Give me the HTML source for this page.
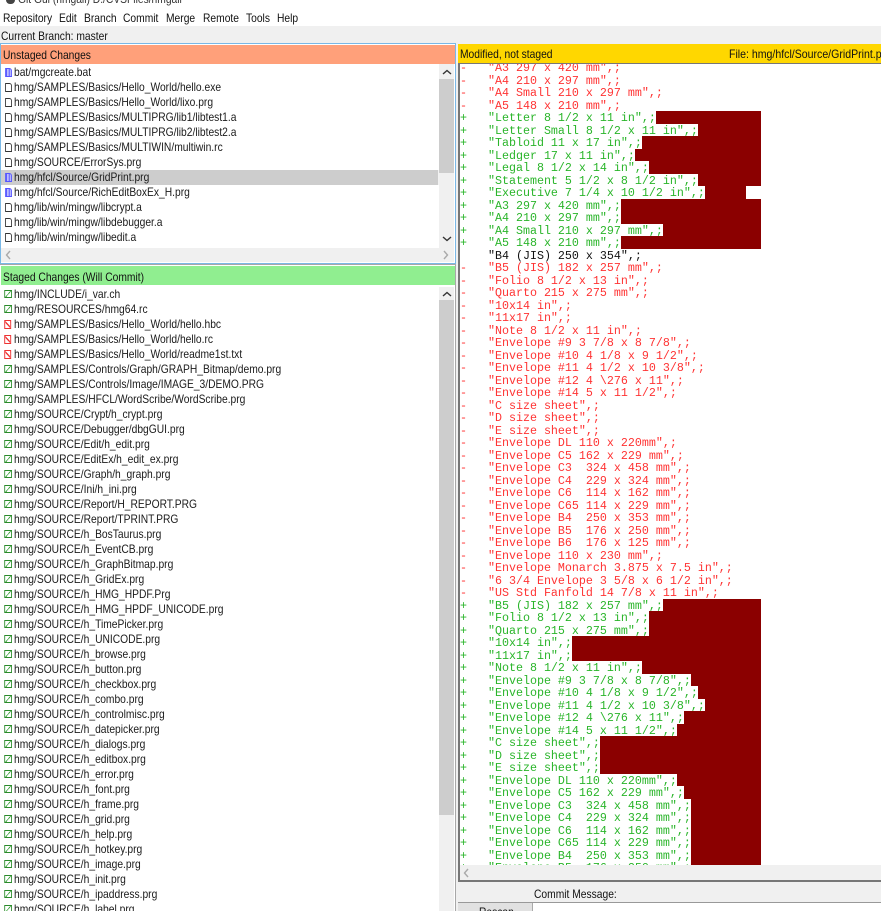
<!DOCTYPE html>
<html><head><meta charset="utf-8"><style>
html,body{margin:0;padding:0;width:881px;height:911px;overflow:hidden;background:#f0f0f0;font:12px/15px "Liberation Sans",sans-serif;color:#111}
div{position:absolute;box-sizing:border-box}
svg{position:absolute;fill:none;stroke-width:1.4}
#w{left:0;top:0;width:881px;height:911px;overflow:hidden}
.t{white-space:pre;transform:scaleX(.856);transform-origin:0 0}
.l{transform:scaleX(.856);transform-origin:0 0;width:512px}
p{margin:0;height:15px;line-height:15px;padding-left:16.36px;position:relative;white-space:pre;color:#1a1a1a}
p::before{content:"";position:absolute;left:5.8px;top:3px;width:8.2px;height:9px;box-sizing:border-box}
.f::before{border:1px solid #333;border-top-right-radius:3px;background:#fff}
.m::before{border:1px solid #55f;border-top-right-radius:3px;background:repeating-linear-gradient(90deg,#55f 0 1px,#ccf 1px 2px)}
.s::before{left:4.7px;top:-1px;margin-top:4px;width:9.3px;height:8px;border:1px solid #2a8a2a;background:linear-gradient(135deg,#fff 45%,#6c6 46%,#2a8a2a 55%,#fff 56%)}
.x::before{left:4.7px;border:1px solid #e33;background:linear-gradient(45deg,#fff 42%,#e33 43%,#e33 57%,#fff 58%),#fcc}
.sel{background:#cdcdcd}
.c{font:11.67px/14.5px "Liberation Mono",monospace}
.c>i{display:block;font-style:normal;height:12.508px;white-space:pre}
.d{color:#f33}
.p{color:#2ab52a}
.k{color:#111}
.a{width:301px;background:#8b0000}
.a b{float:left;height:12.508px;background:#fff;font-weight:normal}
</style></head><body><div id="w">
<div style="left:0;top:0;width:881px;height:26px;background:#fff"></div>
<div style="left:6px;top:-5px;width:9px;height:9px;background:#444;border-radius:4px"></div>
<div class="t" style="left:18px;top:-8px;color:#333">Git Gui (hmgall) D:/CVSFiles/hmgall</div>
<div class="t" style="left:3px;top:11px">Repository</div>
<div class="t" style="left:59px;top:11px">Edit</div>
<div class="t" style="left:84px;top:11px">Branch</div>
<div class="t" style="left:123px;top:11px">Commit</div>
<div class="t" style="left:166px;top:11px">Merge</div>
<div class="t" style="left:203px;top:11px">Remote</div>
<div class="t" style="left:246px;top:11px">Tools</div>
<div class="t" style="left:277px;top:11px">Help</div>
<div class="t" style="left:1px;top:29px">Current Branch: master</div>

<div style="left:0;top:43px;width:456px;height:221px;border:1px solid #7ab8e6;background:#fff"></div>
<div style="left:1px;top:45px;width:454px;height:19px;background:#ffa07a"></div>
<div class="t" style="left:3px;top:48px">Unstaged Changes</div>
<div style="left:1px;top:65px;width:438px;height:183px;overflow:hidden;background:#fff">
<div class="l" style="left:-1px;top:0">
<p class="m">bat/mgcreate.bat</p>
<p class="f">hmg/SAMPLES/Basics/Hello_World/hello.exe</p>
<p class="f">hmg/SAMPLES/Basics/Hello_World/lixo.prg</p>
<p class="f">hmg/SAMPLES/Basics/MULTIPRG/lib1/libtest1.a</p>
<p class="f">hmg/SAMPLES/Basics/MULTIPRG/lib2/libtest2.a</p>
<p class="f">hmg/SAMPLES/Basics/MULTIWIN/multiwin.rc</p>
<p class="f">hmg/SOURCE/ErrorSys.prg</p>
<p class="m sel">hmg/hfcl/Source/GridPrint.prg</p>
<p class="m">hmg/hfcl/Source/RichEditBoxEx_H.prg</p>
<p class="f">hmg/lib/win/mingw/libcrypt.a</p>
<p class="f">hmg/lib/win/mingw/libdebugger.a</p>
<p class="f">hmg/lib/win/mingw/libedit.a</p>
</div></div>
<div style="left:439px;top:64px;width:15px;height:184px;background:#f0f0f0"></div>
<div style="left:439px;top:79px;width:15px;height:94px;background:#cdcdcd"></div>
<svg style="left:442px;top:69px" width="10" height="6" stroke="#333"><path d="M1 5L5 1.5L9 5"/></svg>
<svg style="left:442px;top:236px" width="10" height="6" stroke="#333"><path d="M1 1L5 4.5L9 1"/></svg>
<div style="left:1px;top:248px;width:453px;height:14px;background:#f0f0f0"></div>
<svg style="left:5px;top:250px" width="6" height="10" stroke="#aaa"><path d="M5 1L1.5 5L5 9"/></svg>
<svg style="left:443px;top:250px" width="6" height="10" stroke="#aaa"><path d="M1 1L4.5 5L1 9"/></svg>

<div style="left:0;top:264px;width:456px;height:647px;background:#fff;border-top:1px solid #a8a8a8;border-right:1px solid #a8a8a8"></div>
<div style="left:1px;top:266px;width:454px;height:19px;background:#90ee90"></div>
<div class="t" style="left:3px;top:270px">Staged Changes (Will Commit)</div>
<div style="left:0;top:287px;width:439px;height:624px;overflow:hidden;background:#fff">
<div class="l" style="left:0;top:0">
<p class="s">hmg/INCLUDE/i_var.ch</p>
<p class="s">hmg/RESOURCES/hmg64.rc</p>
<p class="x">hmg/SAMPLES/Basics/Hello_World/hello.hbc</p>
<p class="x">hmg/SAMPLES/Basics/Hello_World/hello.rc</p>
<p class="x">hmg/SAMPLES/Basics/Hello_World/readme1st.txt</p>
<p class="s">hmg/SAMPLES/Controls/Graph/GRAPH_Bitmap/demo.prg</p>
<p class="s">hmg/SAMPLES/Controls/Image/IMAGE_3/DEMO.PRG</p>
<p class="s">hmg/SAMPLES/HFCL/WordScribe/WordScribe.prg</p>
<p class="s">hmg/SOURCE/Crypt/h_crypt.prg</p>
<p class="s">hmg/SOURCE/Debugger/dbgGUI.prg</p>
<p class="s">hmg/SOURCE/Edit/h_edit.prg</p>
<p class="s">hmg/SOURCE/EditEx/h_edit_ex.prg</p>
<p class="s">hmg/SOURCE/Graph/h_graph.prg</p>
<p class="s">hmg/SOURCE/Ini/h_ini.prg</p>
<p class="s">hmg/SOURCE/Report/H_REPORT.PRG</p>
<p class="s">hmg/SOURCE/Report/TPRINT.PRG</p>
<p class="s">hmg/SOURCE/h_BosTaurus.prg</p>
<p class="s">hmg/SOURCE/h_EventCB.prg</p>
<p class="s">hmg/SOURCE/h_GraphBitmap.prg</p>
<p class="s">hmg/SOURCE/h_GridEx.prg</p>
<p class="s">hmg/SOURCE/h_HMG_HPDF.Prg</p>
<p class="s">hmg/SOURCE/h_HMG_HPDF_UNICODE.prg</p>
<p class="s">hmg/SOURCE/h_TimePicker.prg</p>
<p class="s">hmg/SOURCE/h_UNICODE.prg</p>
<p class="s">hmg/SOURCE/h_browse.prg</p>
<p class="s">hmg/SOURCE/h_button.prg</p>
<p class="s">hmg/SOURCE/h_checkbox.prg</p>
<p class="s">hmg/SOURCE/h_combo.prg</p>
<p class="s">hmg/SOURCE/h_controlmisc.prg</p>
<p class="s">hmg/SOURCE/h_datepicker.prg</p>
<p class="s">hmg/SOURCE/h_dialogs.prg</p>
<p class="s">hmg/SOURCE/h_editbox.prg</p>
<p class="s">hmg/SOURCE/h_error.prg</p>
<p class="s">hmg/SOURCE/h_font.prg</p>
<p class="s">hmg/SOURCE/h_frame.prg</p>
<p class="s">hmg/SOURCE/h_grid.prg</p>
<p class="s">hmg/SOURCE/h_help.prg</p>
<p class="s">hmg/SOURCE/h_hotkey.prg</p>
<p class="s">hmg/SOURCE/h_image.prg</p>
<p class="s">hmg/SOURCE/h_init.prg</p>
<p class="s">hmg/SOURCE/h_ipaddress.prg</p>
<p class="s">hmg/SOURCE/h_label.prg</p>
</div></div>
<div style="left:439px;top:287px;width:15px;height:624px;background:#f0f0f0"></div>
<div style="left:439px;top:300px;width:15px;height:515px;background:#cdcdcd"></div>
<svg style="left:442px;top:291px" width="10" height="6" stroke="#333"><path d="M1 5L5 1.5L9 5"/></svg>

<div style="left:458px;top:44px;width:423px;height:20px;background:#ffd700;border-bottom:1px solid #777"></div>
<div class="t" style="left:460px;top:47px">Modified, not staged</div>
<div class="t" style="left:729px;top:47px;transform:scaleX(.88)">File: hmg/hfcl/Source/GridPrint.prg</div>
<div style="left:458px;top:64px;width:423px;height:818px;background:#fff;border-left:2px solid #777;border-bottom:2px solid #777"></div>
<div style="left:460px;top:64px;width:421px;height:801px;overflow:hidden">
<div class="c" style="left:0;top:-3px;width:421px">
<i class="d">-   "A3 297 x 420 mm",;</i>
<i class="d">-   "A4 210 x 297 mm",;</i>
<i class="d">-   "A4 Small 210 x 297 mm",;</i>
<i class="d">-   "A5 148 x 210 mm",;</i>
<i class="p a"><b>+   "Letter 8 1/2 x 11 in",;</b></i>
<i class="p a"><b>+   "Letter Small 8 1/2 x 11 in",;</b></i>
<i class="p a"><b>+   "Tabloid 11 x 17 in",;</b></i>
<i class="p a"><b>+   "Ledger 17 x 11 in",;</b></i>
<i class="p a"><b>+   "Legal 8 1/2 x 14 in",;</b></i>
<i class="p a"><b>+   "Statement 5 1/2 x 8 1/2 in",;</b></i>
<i class="p a" style="width:286px"><b>+   "Executive 7 1/4 x 10 1/2 in",;</b></i>
<i class="p a"><b>+   "A3 297 x 420 mm",;</b></i>
<i class="p a"><b>+   "A4 210 x 297 mm",;</b></i>
<i class="p a"><b>+   "A4 Small 210 x 297 mm",;</b></i>
<i class="p a"><b>+   "A5 148 x 210 mm",;</b></i>
<i class="k">    "B4 (JIS) 250 x 354",;</i>
<i class="d">-   "B5 (JIS) 182 x 257 mm",;</i>
<i class="d">-   "Folio 8 1/2 x 13 in",;</i>
<i class="d">-   "Quarto 215 x 275 mm",;</i>
<i class="d">-   "10x14 in",;</i>
<i class="d">-   "11x17 in",;</i>
<i class="d">-   "Note 8 1/2 x 11 in",;</i>
<i class="d">-   "Envelope #9 3 7/8 x 8 7/8",;</i>
<i class="d">-   "Envelope #10 4 1/8 x 9 1/2",;</i>
<i class="d">-   "Envelope #11 4 1/2 x 10 3/8",;</i>
<i class="d">-   "Envelope #12 4 \276 x 11",;</i>
<i class="d">-   "Envelope #14 5 x 11 1/2",;</i>
<i class="d">-   "C size sheet",;</i>
<i class="d">-   "D size sheet",;</i>
<i class="d">-   "E size sheet",;</i>
<i class="d">-   "Envelope DL 110 x 220mm",;</i>
<i class="d">-   "Envelope C5 162 x 229 mm",;</i>
<i class="d">-   "Envelope C3  324 x 458 mm",;</i>
<i class="d">-   "Envelope C4  229 x 324 mm",;</i>
<i class="d">-   "Envelope C6  114 x 162 mm",;</i>
<i class="d">-   "Envelope C65 114 x 229 mm",;</i>
<i class="d">-   "Envelope B4  250 x 353 mm",;</i>
<i class="d">-   "Envelope B5  176 x 250 mm",;</i>
<i class="d">-   "Envelope B6  176 x 125 mm",;</i>
<i class="d">-   "Envelope 110 x 230 mm",;</i>
<i class="d">-   "Envelope Monarch 3.875 x 7.5 in",;</i>
<i class="d">-   "6 3/4 Envelope 3 5/8 x 6 1/2 in",;</i>
<i class="d">-   "US Std Fanfold 14 7/8 x 11 in",;</i>
<i class="p a"><b>+   "B5 (JIS) 182 x 257 mm",;</b></i>
<i class="p a"><b>+   "Folio 8 1/2 x 13 in",;</b></i>
<i class="p a"><b>+   "Quarto 215 x 275 mm",;</b></i>
<i class="p a"><b>+   "10x14 in",;</b></i>
<i class="p a"><b>+   "11x17 in",;</b></i>
<i class="p a"><b>+   "Note 8 1/2 x 11 in",;</b></i>
<i class="p a"><b>+   "Envelope #9 3 7/8 x 8 7/8",;</b></i>
<i class="p a"><b>+   "Envelope #10 4 1/8 x 9 1/2",;</b></i>
<i class="p a"><b>+   "Envelope #11 4 1/2 x 10 3/8",;</b></i>
<i class="p a"><b>+   "Envelope #12 4 \276 x 11",;</b></i>
<i class="p a"><b>+   "Envelope #14 5 x 11 1/2",;</b></i>
<i class="p a"><b>+   "C size sheet",;</b></i>
<i class="p a"><b>+   "D size sheet",;</b></i>
<i class="p a"><b>+   "E size sheet",;</b></i>
<i class="p a"><b>+   "Envelope DL 110 x 220mm",;</b></i>
<i class="p a"><b>+   "Envelope C5 162 x 229 mm",;</b></i>
<i class="p a"><b>+   "Envelope C3  324 x 458 mm",;</b></i>
<i class="p a"><b>+   "Envelope C4  229 x 324 mm",;</b></i>
<i class="p a"><b>+   "Envelope C6  114 x 162 mm",;</b></i>
<i class="p a"><b>+   "Envelope C65 114 x 229 mm",;</b></i>
<i class="p a"><b>+   "Envelope B4  250 x 353 mm",;</b></i>
<i class="p a"><b>+   "Envelope B5  176 x 250 mm",;</b></i>
</div></div>
<div style="left:460px;top:865px;width:421px;height:15px;background:#f0f0f0"></div>
<svg style="left:463px;top:868px" width="6" height="10" stroke="#aaa"><path d="M5 1L1.5 5L5 9"/></svg>
<div class="t" style="left:534px;top:887px">Commit Message:</div>
<div style="left:458px;top:902px;width:423px;height:9px;background:#fff;border-top:1px solid #999"></div>
<div style="left:458px;top:903px;width:75px;height:8px;background:#e1e1e1;border-right:1px solid #aaa;overflow:hidden">
<div class="t" style="left:21px;top:2px">Rescan</div>
</div>
</div></body></html>
